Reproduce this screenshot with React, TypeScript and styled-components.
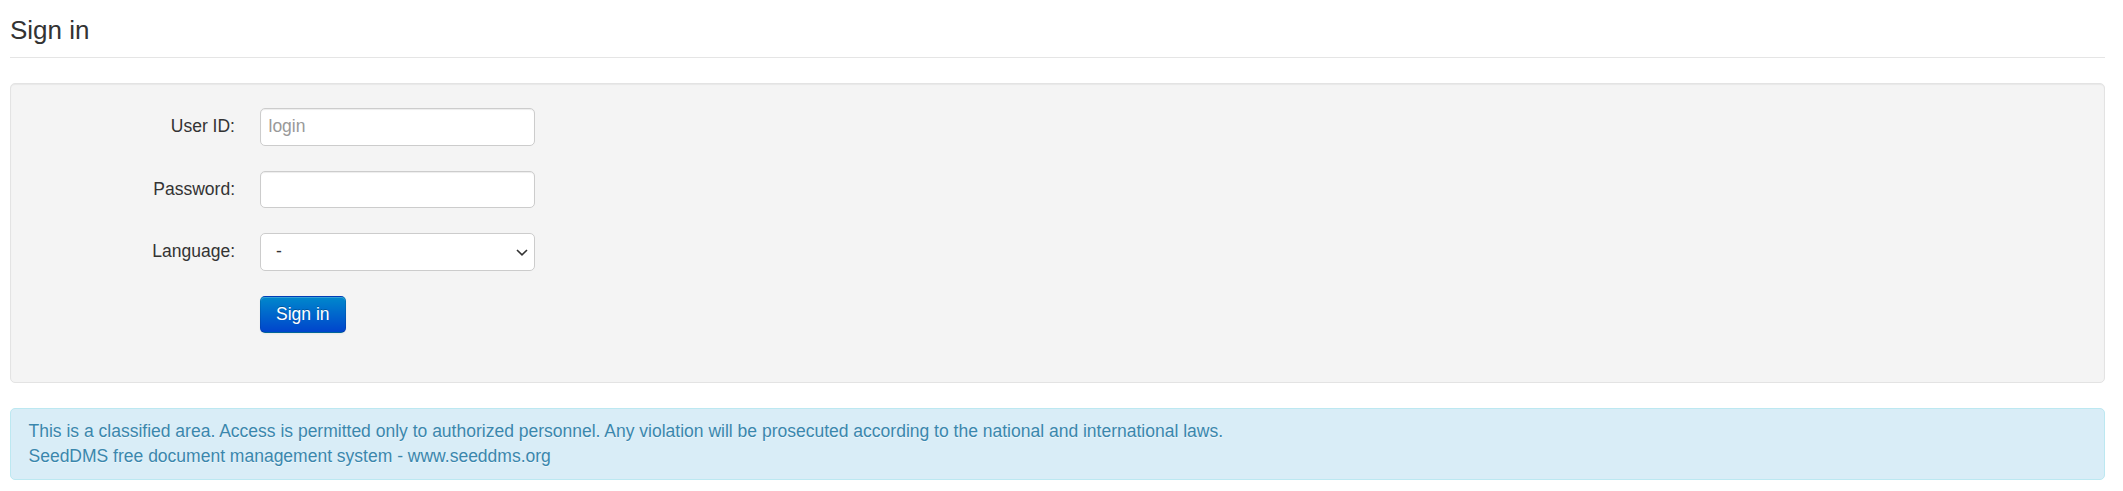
import React from "react";
import styled, { createGlobalStyle } from "styled-components";

const GlobalStyle = createGlobalStyle`
  html, body {
    margin: 0;
    padding: 0;
    background: #ffffff;
  }
  body {
    font-family: "Liberation Sans", Arial, Helvetica, sans-serif;
    font-size: 17.5px;
    line-height: 25px;
    color: #333333;
  }
  * { box-sizing: border-box; }
`;

const Page = styled.div`
  padding: 10px 18px 0 10px;
`;

const Heading = styled.div`
  font-size: 26px;
  line-height: 40px;
  font-weight: normal;
  color: #333333;
  padding: 0 0 7px 0;
  border-bottom: 1px solid #e5e5e5;
  margin-bottom: 25px;
`;

const Well = styled.form`
  display: flex;
  flex-direction: column;
  gap: 25px;
  padding: 24px 24px 49px 24px;
  background: #f4f4f4;
  border: 1px solid #e3e3e3;
  border-radius: 5px;
  box-shadow: inset 0 1px 1px rgba(0, 0, 0, 0.05);
  margin: 0 0 25px 0;
`;

const FormRow = styled.div`
  display: grid;
  grid-template-columns: 200px 1fr;
  column-gap: 25px;
  align-items: start;
`;

const Label = styled.label`
  text-align: right;
  padding-top: 6.25px;
  font-size: 17.5px;
  line-height: 25px;
  color: #333333;
`;

const Control = styled.div`
  display: flex;
`;

const fieldBase = `
  width: 275px;
  height: 37.5px;
  padding: 5px 7.5px;
  font-family: "Liberation Sans", Arial, Helvetica, sans-serif;
  font-size: 17.5px;
  line-height: 25px;
  color: #555555;
  background: #ffffff;
  border: 1.25px solid #cccccc;
  border-radius: 5px;
  outline: none;
  margin: 0;
`;

const TextInput = styled.input`
  ${fieldBase}
  box-shadow: inset 0 1px 1px rgba(0, 0, 0, 0.075);
  &::placeholder {
    color: #999999;
  }
`;

const SelectWrap = styled.div`
  position: relative;
  width: 275px;
  height: 37.5px;
`;

const Select = styled.select`
  ${fieldBase}
  appearance: none;
  -webkit-appearance: none;
  padding-left: 15px;
  color: #333333;
`;

const Chevron = styled.svg`
  position: absolute;
  right: 7px;
  top: 16px;
  pointer-events: none;
`;

const PrimaryButton = styled.button`
  display: inline-block;
  height: 37.5px;
  padding: 5px 15px;
  font-family: "Liberation Sans", Arial, Helvetica, sans-serif;
  font-size: 17.5px;
  line-height: 25px;
  color: #ffffff;
  text-shadow: 0 -1px 0 rgba(0, 0, 0, 0.25);
  background-color: #006dcc;
  background-image: linear-gradient(to bottom, #0088cc, #0044cc);
  border: 1.25px solid rgba(0, 0, 0, 0.1);
  border-bottom-color: rgba(0, 0, 0, 0.25);
  border-radius: 5px;
  box-shadow: inset 0 1px 0 rgba(255, 255, 255, 0.2), 0 1px 2px rgba(0, 0, 0, 0.05);
  cursor: pointer;
  margin: 0;
`;

const Alert = styled.div`
  padding: 10px 43.75px 10px 17.5px;
  background: #d9edf7;
  border: 1px solid #bce8f1;
  border-radius: 5px;
  color: #3a87ad;
  font-size: 17.5px;
  line-height: 25px;
  text-shadow: 0 1px 0 rgba(255, 255, 255, 0.5);
`;

export default function App() {
  return (
    <>
      <GlobalStyle />
      <Page>
        <Heading>Sign in</Heading>
        <Well onSubmit={(e) => e.preventDefault()}>
          <FormRow>
            <Label htmlFor="login">User ID:</Label>
            <Control>
              <TextInput id="login" type="text" placeholder="login" />
            </Control>
          </FormRow>
          <FormRow>
            <Label htmlFor="pwd">Password:</Label>
            <Control>
              <TextInput id="pwd" type="password" />
            </Control>
          </FormRow>
          <FormRow>
            <Label htmlFor="lang">Language:</Label>
            <Control>
              <SelectWrap>
                <Select id="lang" defaultValue="">
                  <option value="">-</option>
                </Select>
                <Chevron width="12" height="7" viewBox="0 0 12 7">
                  <path d="M1 1 L6 5.8 L11 1" fill="none" stroke="#333" strokeWidth="1.6" />
                </Chevron>
              </SelectWrap>
            </Control>
          </FormRow>
          <FormRow>
            <span />
            <Control>
              <PrimaryButton type="submit">Sign in</PrimaryButton>
            </Control>
          </FormRow>
        </Well>
        <Alert>
          This is a classified area. Access is permitted only to authorized personnel. Any violation will be prosecuted according to the national and international laws.
          <br />
          SeedDMS free document management system - www.seeddms.org
        </Alert>
      </Page>
    </>
  );
}
